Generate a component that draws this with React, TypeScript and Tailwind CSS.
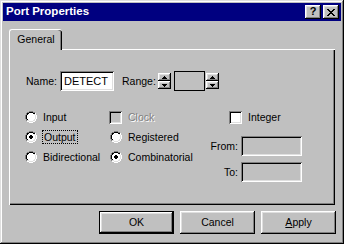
const raised =
  "shadow-[inset_-1px_-1px_0_#000,inset_1px_1px_0_#fff,inset_-2px_-2px_0_#808080,inset_2px_2px_0_#dfdfdf]";
const sunken =
  "shadow-[inset_1px_1px_0_#808080,inset_-1px_-1px_0_#fff,inset_2px_2px_0_#000,inset_-2px_-2px_0_#dfdfdf]";

function Radio({ checked }: { checked?: boolean }) {
  return (
    <svg width="12" height="12" viewBox="0 0 12 12" className="shrink-0">
      <path d="M4 0h4v1H4zM2 1h2v1H2zM8 1h2v1H8zM1 2h1v2H1zM0 4h1v4H0zM1 8h1v2H1z" fill="#808080" />
      <path d="M10 2h1v2h-1zM11 4h1v4h-1zM10 8h1v2h-1zM8 10h2v1H8zM2 10h2v1H2zM4 11h4v1H4z" fill="#fff" />
      <path d="M4 1h4v1H4zM2 2h2v1H2zM8 2h2v1H8zM2 3h1v1H2zM1 4h1v4H1zM2 8h1v1H2z" fill="#000" />
      <path d="M9 3h1v1H9zM10 4h1v4h-1zM9 8h1v1H9zM8 9h2v1H8zM2 9h2v1H2zM4 10h4v1H4z" fill="#dfdfdf" />
      <path d="M4 2h4v1H4zM3 3h6v1H3zM2 4h8v4H2zM3 8h6v1H3zM4 9h4v1H4z" fill="#fff" />
      {checked && <path d="M5 4h2v1H5zM4 5h4v2H4zM5 7h2v1H5z" fill="#000" />}
    </svg>
  );
}

function Check({ disabled }: { disabled?: boolean }) {
  return (
    <div
      className={`w-[13px] h-[13px] shrink-0 ${sunken} ${disabled ? "bg-[#c0c0c0]" : "bg-white"}`}
    />
  );
}

function Spinner({ w }: { w: string }) {
  return (
    <div className={`flex flex-col ${w}`}>
      <div className={`h-[8px] flex items-center justify-center bg-[#c0c0c0] ${raised}`}>
        <svg width="5" height="3" viewBox="0 0 5 3">
          <path d="M2 0h1v1H2zM1 1h3v1H1zM0 2h5v1H0z" fill="#000" />
        </svg>
      </div>
      <div className={`h-[8px] flex items-center justify-center bg-[#c0c0c0] ${raised}`}>
        <svg width="5" height="3" viewBox="0 0 5 3">
          <path d="M0 0h5v1H0zM1 1h3v1H1zM2 2h1v1H2z" fill="#000" />
        </svg>
      </div>
    </div>
  );
}

export default function App() {
  return (
    <div
      className="w-[344px] h-[244px] bg-[#c0c0c0] p-[3px] text-black shadow-[inset_-1px_-1px_0_#000,inset_1px_1px_0_#dfdfdf,inset_-2px_-2px_0_#808080,inset_2px_2px_0_#fff]"
      style={{ fontFamily: '"Liberation Sans", Arial, sans-serif' }}
    >
      {/* title bar */}
      <div className="h-[18px] bg-[#000080] flex items-center justify-between pl-[3px] pr-[2px]">
        <span className="text-white font-bold text-[11.5px] leading-none">Port Properties</span>
        <div className="flex gap-[2px]">
          <div className={`w-[16px] h-[14px] bg-[#c0c0c0] flex items-center justify-center ${raised}`}>
            <span className="font-bold text-[11px] leading-none pb-[1px]">?</span>
          </div>
          <div className={`w-[16px] h-[14px] bg-[#c0c0c0] flex items-center justify-center ${raised}`}>
            <svg width="8" height="7" viewBox="0 0 8 7">
              <path
                d="M0 0h2v1H0zM6 0h2v1H6zM1 1h2v1H1zM5 1h2v1H5zM2 2h4v1H2zM3 3h2v1H3zM2 4h4v1H2zM1 5h2v1H1zM5 5h2v1H5zM0 6h2v1H0zM6 6h2v1H6z"
                fill="#000"
              />
            </svg>
          </div>
        </div>
      </div>

      {/* tabs + panel */}
      <div className="pt-[8px] px-[6px] text-[10.5px] leading-none">
        <div className="relative z-10 -mb-[1px] w-[53px] h-[21px] bg-[#c0c0c0] border-l border-t border-white rounded-tl-[3px] rounded-tr-[3px] shadow-[inset_-1px_0_0_#000,inset_-2px_0_0_#808080] flex items-center justify-center pb-[2px]">
          General
        </div>
        <div className="h-[156px] pt-[22px] pl-[16px] shadow-[inset_1px_1px_0_#fff,inset_-1px_-1px_0_#000,inset_-2px_-2px_0_#808080]">
          {/* name / range */}
          <div className="flex items-center h-[20px] ml-[1px]">
            <span className="w-[34px]">Name:</span>
            <div className={`w-[54px] h-[20px] bg-white ${sunken} flex items-center pl-[4px] text-[11px]`}>
              DETECT
            </div>
            <span className="ml-[8px] w-[36px]">Range:</span>
            <Spinner w="w-[13px]" />
            <div className="ml-[3px] w-[31px] h-[20px] border border-black bg-[#c0c0c0]" />
            <div className="ml-[1px]">
              <Spinner w="w-[13px]" />
            </div>
          </div>

          {/* options */}
          <div className="flex mt-[16px]">
            <div className="w-[84px] flex flex-col">
              <div className="h-[20px] flex items-center gap-[6px]">
                <Radio />
                <span>Input</span>
              </div>
              <div className="h-[20px] flex items-center gap-[5px]">
                <Radio checked />
                <span className="border border-dotted border-black px-[1px] py-[1px]">Output</span>
              </div>
              <div className="h-[20px] flex items-center gap-[6px]">
                <Radio />
                <span>Bidirectional</span>
              </div>
            </div>
            <div className="w-[100px] flex flex-col">
              <div className="h-[20px] flex items-center gap-[6px]">
                <Check disabled />
                <span className="text-[#808080] [text-shadow:1px_1px_0_#fff]">Clock</span>
              </div>
              <div className="h-[20px] flex items-center gap-[6px] pl-[1px]">
                <Radio />
                <span>Registered</span>
              </div>
              <div className="h-[20px] flex items-center gap-[6px] pl-[1px]">
                <Radio checked />
                <span>Combinatorial</span>
              </div>
            </div>
            <div className="w-[93px] flex flex-col">
              <div className="h-[20px] flex items-center gap-[6px] pl-[20px]">
                <Check />
                <span>Integer</span>
              </div>
              <div className="h-[20px] mt-[9px] flex items-center justify-end gap-[3px]">
                <span>From:</span>
                <div className={`w-[61px] h-[20px] bg-[#c0c0c0] ${sunken}`} />
              </div>
              <div className="h-[20px] mt-[6px] flex items-center justify-end gap-[3px]">
                <span>To:</span>
                <div className={`w-[61px] h-[20px] bg-[#c0c0c0] ${sunken}`} />
              </div>
            </div>
          </div>
        </div>
      </div>

      {/* buttons */}
      <div className="flex justify-end gap-[6px] mt-[6px] pr-[5px] text-[10.5px] leading-none">
        <div className="w-[75px] h-[23px] border border-black">
          <div className={`w-full h-full bg-[#c0c0c0] flex items-center justify-center ${raised}`}>OK</div>
        </div>
        <div className={`w-[75px] h-[23px] bg-[#c0c0c0] flex items-center justify-center ${raised}`}>
          Cancel
        </div>
        <div className={`w-[75px] h-[23px] bg-[#c0c0c0] flex items-center justify-center ${raised}`}>
          <span>
            <span className="underline">A</span>pply
          </span>
        </div>
      </div>
    </div>
  );
}
